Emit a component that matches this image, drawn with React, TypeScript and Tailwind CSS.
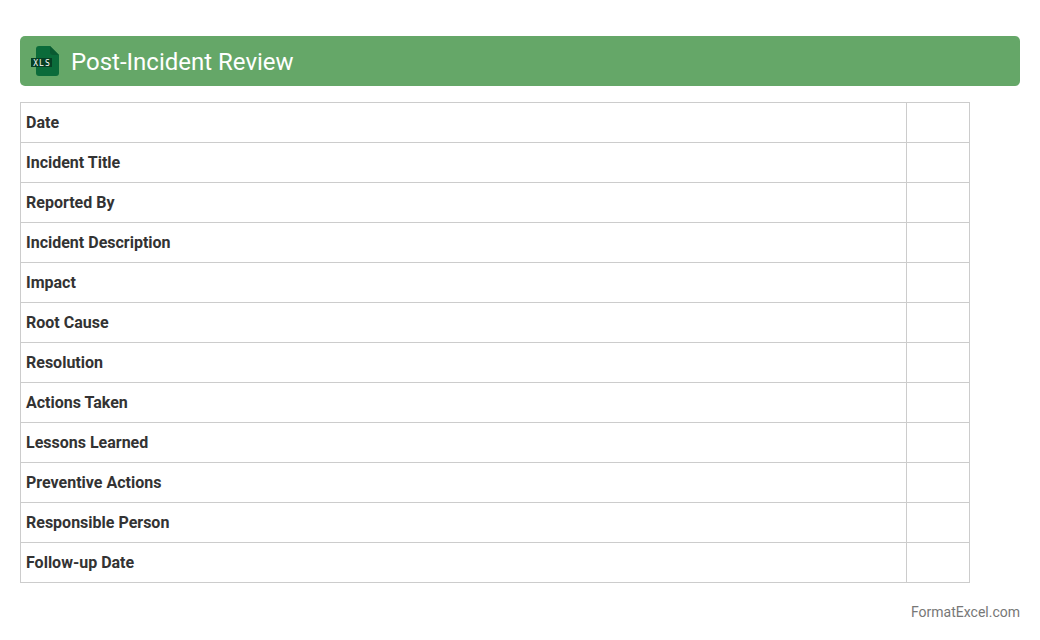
const ROWS = [
  "Date",
  "Incident Title",
  "Reported By",
  "Incident Description",
  "Impact",
  "Root Cause",
  "Resolution",
  "Actions Taken",
  "Lessons Learned",
  "Preventive Actions",
  "Responsible Person",
  "Follow-up Date",
];

function XlsIcon() {
  return (
    <svg width="32" height="32" viewBox="0 0 32 32" className="shrink-0">
      <path d="M9 1h11l9 9v18a3 3 0 0 1-3 3H9a3 3 0 0 1-3-3V4a3 3 0 0 1 3-3z" fill="#0b6b3a" />
      <path d="M20 1l9 9h-6a3 3 0 0 1-3-3z" fill="#0a5a31" />
      <rect x="1" y="13" width="21" height="9" fill="#063f24" />
      <text
        x="12"
        y="20.5"
        textAnchor="middle"
        fontSize="8"
        letterSpacing="1"
        fontFamily="'DejaVu Sans Mono', monospace"
        fill="#fff"
      >
        XLS
      </text>
    </svg>
  );
}

export default function App() {
  return (
    <div className="h-[640px] w-[1040px] bg-white px-5 pt-9 font-['Roboto',sans-serif]">
      <div className="flex h-[50px] items-center gap-[9px] rounded-[5px] bg-[#65a768] pl-[10px]">
        <XlsIcon />
        <h1 className="pt-0.5 text-2xl leading-none font-normal text-white">Post-Incident Review</h1>
      </div>
      <table className="mt-4 w-[950px] table-fixed border-collapse">
        <tbody>
          {ROWS.map((label) => (
            <tr key={label} className="h-10">
              <td className="border border-[#cccccc] px-[5px] text-base font-bold text-[#333333]">{label}</td>
              <td className="w-[63px] border border-[#cccccc]"></td>
            </tr>
          ))}
        </tbody>
      </table>
      <div className="mt-[19px] text-right text-sm text-[#777777]">FormatExcel.com</div>
    </div>
  );
}
